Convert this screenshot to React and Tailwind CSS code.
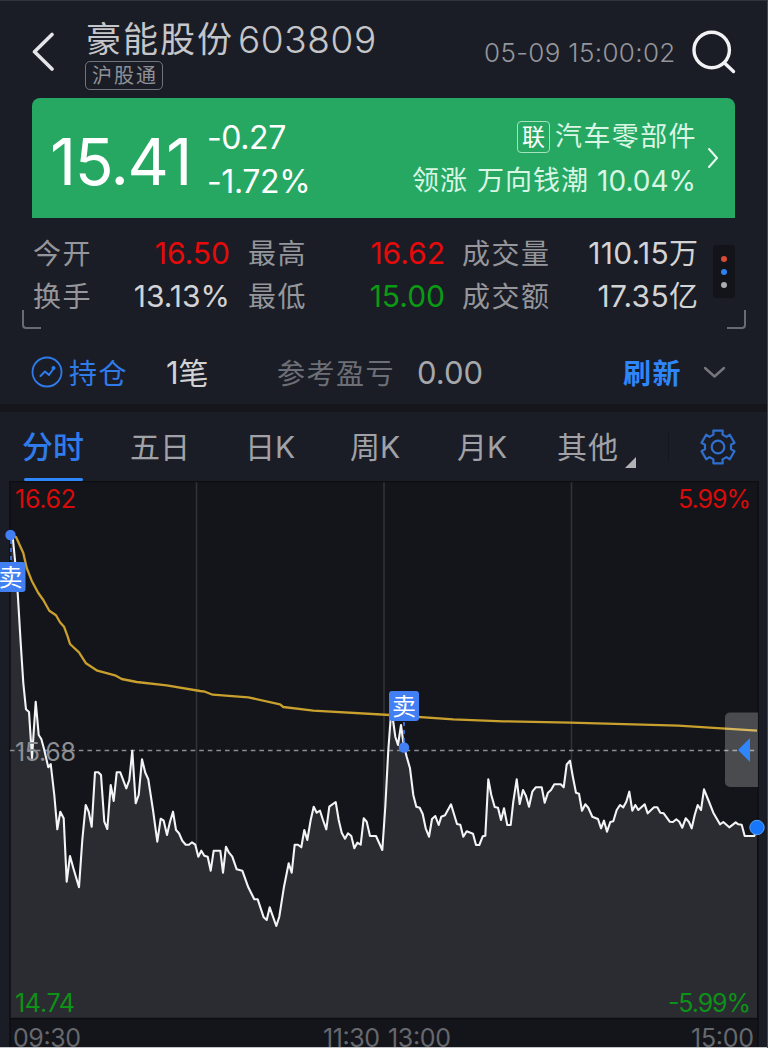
const quotes = [
  { label: '今开', value: '16.50', color: 'text-[#e60a0a]', label2: '最高', value2: '16.62', color2: 'text-[#e60a0a]', label3: '成交量', value3: '110.15', unit: '万' },
  { label: '换手', value: '13.13%', color: 'text-[#d2d3d5]', label2: '最低', value2: '15.00', color2: 'text-[#0a9a14]', label3: '成交额', value3: '17.35', unit: '亿' },
];

const tabs = [
  { name: '五日', width: 'w-[115px]' },
  { name: '日K', width: 'w-[105px]' },
  { name: '周K', width: 'w-[107px]' },
  { name: '月K', width: 'w-[100px]' },
];

const price =
  '12.3,536 13,540 15,560 17.7,593 20.7,643 23.3,683 26,709.3 29,712 32,758 35.7,701.7 38.7,735 41.3,739 44.3,750 48.3,767.3 50.7,764 54.3,795 57.3,829.3 60.3,811.7 63.7,818.3 66.7,881.7 70,856 73.3,868 79,887.3 82.3,840 85.7,805 88.7,811.7 91.7,826.7 95,772.3 98.3,772.3 101,775 104.3,821.7 107.3,829 110.7,785 113.7,801 116.7,772.3 120.3,772.3 126.3,788.3 129.3,780 132.3,750.7 135.7,803.3 138.7,795 142,759.3 145.3,772.7 148.3,779.3 153,810 157.3,841.7 160.7,818.7 163.7,820.7 167,835 170,821.7 173,811.7 176,830 179,833.3 182.3,840.7 185.7,844.7 189,844.7 192,842.3 195.3,844.7 198.3,856.7 201.3,850.7 204.3,855.7 207.7,856.7 210.7,870.7 213.7,850.7 220.3,850.7 223,872.7 226,846.7 229,852.7 232.3,856.7 236.7,869.3 242.3,870.7 248.3,887.3 254.3,899.3 257.7,899.3 263.7,917.3 266.7,920 269.7,907.3 276.3,926 279.3,916.7 284,886.7 288.7,863.3 291.7,872.7 294.7,844.7 298,844.7 301.3,847.3 304.3,830 307.3,840 310.7,820 313.7,806.7 316.7,812.7 320,810.7 323,820 326.3,829.3 329.3,806.7 335.7,802 338.7,820 341.7,832.7 345,838.7 348,833.3 351.3,836 354.3,848.3 357.3,842.7 360.7,844.7 363.7,818.3 366.7,821.7 370,836 376,836 382.3,850 385.3,806.7 388.3,750 390.7,718 393,720 395.3,736.7 398,745 401,725 403.7,745 406.7,756.7 410,768.3 413.3,795 416.3,806.7 419.7,807.7 422.7,814 425.7,828.3 429,836.7 432,819 435.3,816 438.7,825 441.3,816.7 445,815.3 451,804.3 457,824 460.3,824.7 463.3,836.7 466.7,831.3 473,833.7 476,845 479.3,845 482.7,836.3 485.3,835.7 488.3,779.3 491.3,795 494.7,807 498,807.7 501,820 504,808.3 507.3,825 510.7,825 513.3,801.7 516.7,779.3 519.7,804 523,790 526,796 529,806.7 532.3,791.7 535.7,787.3 541.7,787.3 544.7,802.7 548,792.7 551,790 554.3,784.3 560.7,784.3 563.7,787.3 566.7,764.5 570,760.7 572.7,776 576,792.7 579,793.7 582,810.7 585.3,804.3 588.3,807.7 592.3,816.7 598,819 601,828.3 604,820.7 607,831.7 610.3,822 613.3,821.3 616.7,810 620,805 623.3,807.3 626.3,801.7 629.3,791.7 632.3,810.7 635.3,805 638.3,810 644.7,804.3 647.7,813.3 654,807.3 657.3,807.3 660.3,812.7 663.7,813.3 669.7,821.7 673,822 676.3,819.3 679.3,821.7 682.3,827.7 685.7,818.3 689,822 691.7,828.3 694.7,815 697.7,805 701,810 704,789.3 708.3,800 713.3,812.7 720,824.3 723.3,822 729.3,827.3 735.7,822.3 738.3,824.3 741.7,824.7 744.7,836 754.3,836 757,828';

const average =
  '11,535 16,537 23.3,553 26.7,568 31.7,580.7 38.3,593 43.3,600 49.3,610.7 56,615.3 60,622.3 64,626.7 67.7,636.7 70,644 79,652.3 86,663.3 97.3,670.7 115,675.3 121.7,679 136.7,682 166.7,685.3 200,691 205,691.7 212.7,694.7 248.3,697.3 280,704.3 283.3,707 313.3,710.7 390,715 453.3,719.3 503.3,721.3 570,722.7 678.3,725.7 757,730.7';

const gear = Array.from({ length: 6 }, (_, i) => {
  const at = (r, deg) => {
    const a = ((deg + i * 60) * Math.PI) / 180;
    return `${(18 + r * Math.cos(a)).toFixed(2)},${(18 + r * Math.sin(a)).toFixed(2)}`;
  };
  return [at(13.2, -110), at(17, -106), at(17, -74), at(13.2, -70)].join(' ');
}).join(' ');

const Header = () => (
  <header className="flex h-[97px] shrink-0 items-start pl-8">
    <svg width="22" height="40" viewBox="0 0 22 40" fill="none" className="mt-[31px] shrink-0">
      <path d="M20 2.5 2.5 19.8 20 37" stroke="#e4e5e8" strokeWidth="3.6" strokeLinecap="round" strokeLinejoin="round" />
    </svg>
    <div className="ml-8 w-[398px] pt-[17px]">
      <div className="flex h-[43px] items-center whitespace-nowrap text-[#c5c6c9]">
        <span className="w-[152px] text-[35px] leading-none tracking-[2px]">豪能股份</span>
        <span className="text-[37px] leading-none font-light tracking-[0.6px]">603809</span>
      </div>
      <div className="-ml-px flex h-[29px] w-[78px] items-center justify-center rounded-[5px] border-[1.5px] border-[#70737a] text-[20px] leading-none tracking-[2px] text-[#8e9096]">
        <span className="-mr-[2px]">沪股通</span>
      </div>
    </div>
    <span className="mt-[38px] w-[208px] text-[26px] leading-7 font-light tracking-[0.35px] whitespace-nowrap text-[#94969b]">05-09 15:00:02</span>
    <svg width="46" height="46" viewBox="0 0 46 46" fill="none" stroke="#f1f2f4" strokeWidth="3.4" strokeLinecap="round" className="mt-7 shrink-0">
      <circle cx="19.700" cy="21" r="17.700" />
      <path d="m32.500 34 9 8.500" />
    </svg>
  </header>
);

const PriceCard = () => (
  <section className="ml-8 flex h-[120px] w-[703px] shrink-0 items-center rounded-t-[8px] bg-[#26a863] pl-[18px] whitespace-nowrap text-white">
    <span className="mt-[8px] w-[157px] text-[64px] leading-none tracking-[-1.4px]">15.41</span>
    <div className="mt-[4px] flex w-[150px] flex-col gap-[12px] text-[32px] leading-8 tracking-[-0.4px]">
      <span>-0.27</span>
      <span>-1.72%</span>
    </div>
    <div className="mt-[2px] flex w-[339px] flex-col items-end gap-[12px] text-[27px] leading-8 text-[#d9f6e5]">
      <div className="flex items-center">
        <span className="mr-[5px] flex h-8 w-[33px] items-center justify-center rounded-[4px] border-[1.5px] border-[#a3e3bf] text-[23px] text-white">联</span>
        <span className="-mr-px tracking-[1.4px]">汽车零部件</span>
      </div>
      <div className="flex items-center">
        <span className="mr-[9px] tracking-[1px]">领涨</span>
        <span className="mr-[8px] tracking-[1px]">万向钱潮</span>
        <span className="text-[28px]">10.04%</span>
      </div>
    </div>
    <svg width="12" height="24" viewBox="0 0 12 24" fill="none" className="ml-[11px]">
      <path d="m2 3 8 9-8 9" stroke="#eafaf1" strokeWidth="2" strokeLinecap="round" strokeLinejoin="round" />
    </svg>
  </section>
);

const Quotes = () => (
  <section className="relative flex h-[124px] shrink-0 pt-[14px] pl-[33px]">
    <div className="w-[665px]">
      {quotes.map((q) => (
        <div key={q.label} className="flex h-[43px] items-center text-[28px] whitespace-nowrap text-[#94969b]">
          <span className="w-[78px] tracking-[1.5px]">{q.label}</span>
          <span className={`w-[119px] text-right text-[30px] ${q.color}`}>{q.value}</span>
          <span className="ml-[18px] w-[78px] tracking-[1.5px]">{q.label2}</span>
          <span className={`w-[119px] text-right text-[30px] ${q.color2}`}>{q.value2}</span>
          <span className="ml-[17px] tracking-[1.5px]">{q.label3}</span>
          <span className="flex flex-1 items-center justify-end text-[#d2d3d5]">
            <span className="text-[30px] tracking-[0.3px]">{q.value3}</span>
            <span className="text-[29px]">{q.unit}</span>
          </span>
        </div>
      ))}
    </div>
    <div className="mt-[13px] ml-[15px] flex h-[53px] w-[22px] flex-col items-center justify-center gap-[7px] rounded-[3px] bg-[#121419]">
      <i className="size-[6px] rounded-full bg-[#da4a35]" />
      <i className="size-[6px] rounded-full bg-[#2e82f4]" />
      <i className="size-[6px] rounded-full bg-[#acadb0]" />
    </div>
    <i className="absolute top-[92px] left-[22px] size-[19px] rounded-bl-[4px] border-b-2 border-l-2 border-[#686b73]" />
    <i className="absolute top-[92px] left-[727px] size-[19px] rounded-br-[4px] border-r-2 border-b-2 border-[#686b73]" />
  </section>
);

const Position = () => (
  <section className="flex h-[62px] shrink-0 items-center pt-px pl-[31px] text-[28px] whitespace-nowrap">
    <svg width="32" height="32" viewBox="0 0 32 32" fill="none" stroke="#2f7bea" strokeWidth="2" strokeLinecap="round" strokeLinejoin="round" className="-mt-[3px]">
      <circle cx="16" cy="16" r="14.5" strokeWidth="1.8" />
      <path d="m9.5 20 4.5-4.500 4 3.500 5-7" />
      <circle cx="22.500" cy="12" r="1" />
    </svg>
    <span className="ml-[6px] w-[97px] tracking-[1.5px] text-[#2f7bea]">持仓</span>
    <span className="w-[111px] text-[30px] text-[#d2d3d5]"><span className="text-[31px]">1</span>笔</span>
    <span className="w-[140px] tracking-[1.5px] text-[#6d6f76]">参考盈亏</span>
    <span className="w-[206px] text-[31px] text-[#a6a8ac]">0.00</span>
    <span className="w-[79px] font-bold tracking-[1.5px] text-[#2f86fa]">刷新</span>
    <svg width="24" height="14" viewBox="0 0 24 14" fill="none" className="-mt-px">
      <path d="m3 2 9.500 8.500L22 2" stroke="#75777d" strokeWidth="2.400" strokeLinecap="round" strokeLinejoin="round" />
    </svg>
  </section>
);

const Tabs = () => (
  <nav className="flex h-[77px] shrink-0 items-center border-t-8 border-[#14161c] pl-[22px] text-[30px] whitespace-nowrap text-[#a0a2a7]">
    <div className="flex h-full w-[108px] flex-col text-[#2f7bea]">
      <span className="pt-[13px] text-[31px] font-medium leading-[44px]">分时</span>
      <i className="mt-auto ml-[2px] h-[3px] w-[59px] rounded-sm bg-[#2f86fa]" />
    </div>
    {tabs.map((tab) => (
      <span key={tab.name} className={`mt-[2px] ${tab.width}`}>{tab.name}</span>
    ))}
    <span className="mt-[2px] w-[68px] tracking-[1px]">其他</span>
    <svg width="11" height="11" viewBox="0 0 11 11" className="mt-[32px]">
      <path d="M11 0v11H0z" fill="#b0b2b5" />
    </svg>
    <i className="ml-8 h-[31px] w-px bg-[#15171d]" />
    <svg width="36" height="36" viewBox="0 0 36 36" fill="none" stroke="#2f70cf" strokeWidth="2.200" strokeLinejoin="round" className="ml-[31px]">
      <polygon points={gear} />
      <circle cx="18" cy="18" r="6.300" />
    </svg>
  </nav>
);

const SellMark = ({ x, y }) => (
  <g>
    <rect x={x} y={y} width="30" height="30" rx="3" fill="#427ff2" />
    <text x={x + 15} y={y + 23.500} fontSize="24" textAnchor="middle" fill="#fff">卖</text>
  </g>
);

const Chart = () => (
  <svg width="768" height="567" viewBox="0 481 768 567" className="block shrink-0">
    <rect x="10" y="481" width="748" height="566" fill="#13151a" />
    <polygon points={`10,1018 10,536 ${price} 757,1018`} fill="#2a2c31" />
    <path d="M196.500 482V1018M384 482V1018M571.500 482V1018" stroke="#fff" strokeOpacity=".13" strokeWidth="1.500" clipPath="url(#above)" />
    <clipPath id="above">
      <polygon points={`10,481 10,536 ${price} 757,481`} />
    </clipPath>
    <path d="M10 1047V481.500H758V1047M10 1018.500H758" stroke="#0c0e12" strokeWidth="1.500" fill="none" />
    <path d="M10 750.500H757" stroke="#8b8d91" strokeWidth="1.600" strokeDasharray="4.600 4" />
    <polyline points={price} fill="none" stroke="#f3f4f5" strokeWidth="2.100" strokeLinejoin="round" />
    <polyline points={average} fill="none" stroke="#c9a02d" strokeWidth="2.300" strokeLinejoin="round" />

    <g fontSize="25">
      <text x="15" y="508" fill="#d80b0b" textLength="61">16.62</text>
      <text x="678" y="508" fill="#d80b0b" textLength="73">5.99%</text>
      <text x="15" y="761" fill="#8d8e92" textLength="61">15.68</text>
      <text x="15" y="1012" fill="#0d9218" textLength="60">14.74</text>
      <text x="668" y="1012" fill="#0d9218" textLength="83">-5.99%</text>
      <g fill="#66686e">
        <text x="13" y="1047" textLength="68">09:30</text>
        <text x="323" y="1047" textLength="57">11:30</text>
        <text x="388" y="1047" textLength="63">13:00</text>
        <text x="691" y="1047" textLength="63">15:00</text>
      </g>
    </g>

    <path d="M11 540V562M404 722V744" stroke="#427ff2" strokeWidth="1.600" strokeDasharray="4 4" />
    <SellMark x={-4.500} y={562} />
    <SellMark x={389} y={691} />
    <circle cx="10.500" cy="535" r="5.200" fill="#427ff2" />
    <circle cx="404" cy="747.500" r="5.200" fill="#427ff2" />

    <path d="M758 712.500H730a5 5 0 0 0-5 5V782a5 5 0 0 0 5 5H758z" fill="#fff" fillOpacity=".23" />
    <path d="M750 738V762L738 750z" fill="#2f86fa" />
    <circle cx="757" cy="827.500" r="7.200" fill="#1677fa" stroke="#58a0f8" />
    <path d="M0 1047.500H768" stroke="#c4c5c9" />
  </svg>
);

const App = () => (
  <main
    lang="zh-CN"
    className="flex h-[1048px] w-[768px] flex-col overflow-hidden border-t border-r border-t-[#30333b] border-r-[#454855] bg-[#1b1d26] font-['Inter','Noto_Sans_CJK_SC',sans-serif]"
  >
    <Header />
    <PriceCard />
    <Quotes />
    <Position />
    <Tabs />
    <Chart />
  </main>
);

export default App;
